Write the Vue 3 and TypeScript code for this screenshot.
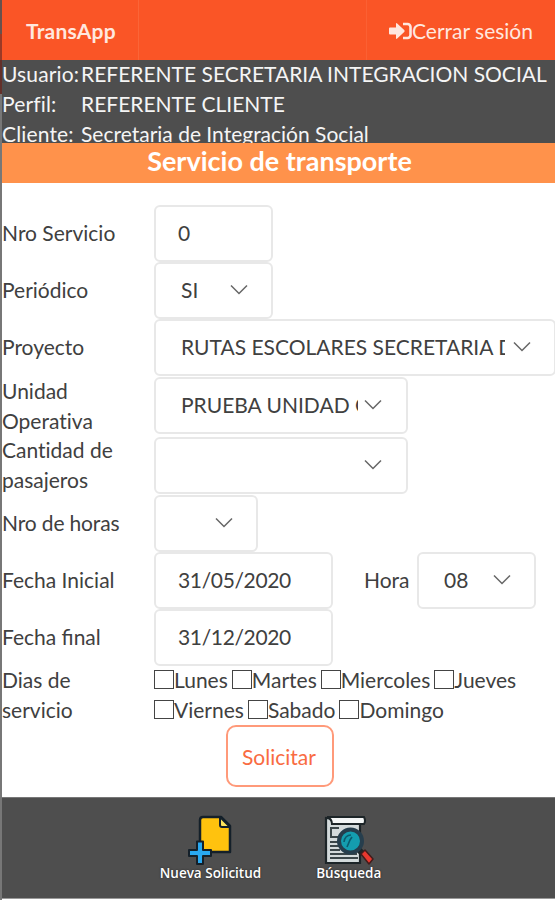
<script setup lang="ts">
interface Profile {
  label: string
  value: string
  kind: string
}

interface Field {
  label: string
  value: string
  select: boolean
  kind: string
  hour?: string
}

const profile: Profile[] = [
  { label: 'Usuario:', value: 'REFERENTE SECRETARIA INTEGRACION SOCIAL', kind: 'user' },
  { label: 'Perfil:', value: 'REFERENTE CLIENTE', kind: 'role' },
  { label: 'Cliente:', value: 'Secretaria de Integración Social', kind: 'client' },
]

const fields: Field[] = [
  { label: 'Nro Servicio', value: '0', select: false, kind: 'number' },
  { label: 'Periódico', value: 'SI', select: true, kind: 'periodic' },
  { label: 'Proyecto', value: 'RUTAS ESCOLARES SECRETARIA D', select: true, kind: 'project' },
  { label: 'Unidad Operativa', value: 'PRUEBA UNIDAD O', select: true, kind: 'unit' },
  { label: 'Cantidad de pasajeros', value: '', select: true, kind: 'passengers' },
  { label: 'Nro de horas', value: '', select: true, kind: 'hours' },
  { label: 'Fecha Inicial', value: '31/05/2020', select: false, kind: 'start', hour: '08' },
  { label: 'Fecha final', value: '31/12/2020', select: false, kind: 'end' },
]

const dayRows: string[][] = [
  ['Lunes', 'Martes', 'Miercoles', 'Jueves'],
  ['Viernes', 'Sabado', 'Domingo'],
]
</script>

<template>
  <div class="screen">
    <div class="edge"></div>
    <div class="page">
      <nav class="topbar">
        <div class="brand">TransApp</div>
        <div class="spacer"></div>
        <a class="logout">
          <svg class="logout-icon" viewBox="0 0 23 18">
            <path d="M1 5.500h6V2q0-1.500 1.200-.5l7 6.500q1 1 0 2l-7 6.500q-1.200 1-1.200-.5v-3.500H1q-1 0-1-1v-5q0-1 1-1z" fill="currentColor" />
            <path d="M14 2h4.500a3 3 0 0 1 3 3v8a3 3 0 0 1-3 3H14" fill="none" stroke="currentColor" stroke-width="2.600" />
          </svg>
          <span>Cerrar sesión</span>
        </a>
      </nav>

      <section class="profile">
        <div v-for="item in profile" :key="item.label" class="profile-row">
          <span class="profile-label">{{ item.label }}</span>
          <span :class="item.kind">{{ item.value }}</span>
        </div>
      </section>

      <h1 class="title"><span>Servicio de transporte</span></h1>

      <main class="form">
        <div v-for="field in fields" :key="field.kind" class="row" :class="'row-' + field.kind">
          <label class="label">{{ field.label }}</label>
          <div class="control" :class="[field.kind, { select: field.select }]">
            <span class="value">{{ field.value }}</span>
            <svg v-if="field.select" class="chevron" viewBox="0 0 18 11">
              <path d="M1 1.500l8 8 8-8" />
            </svg>
          </div>
          <template v-if="field.hour">
            <label class="hour-label">Hora</label>
            <div class="control select hour">
              <span class="value">{{ field.hour }}</span>
              <svg class="chevron" viewBox="0 0 18 11">
                <path d="M1 1.500l8 8 8-8" />
              </svg>
            </div>
          </template>
        </div>

        <div class="row row-days">
          <label class="label days-label">Dias de servicio</label>
          <div class="days">
            <div v-for="(days, index) in dayRows" :key="index" class="day-row">
              <label v-for="day in days" :key="day" class="day"><i class="box"></i>{{ day }}</label>
            </div>
          </div>
        </div>

        <button class="submit" type="button">Solicitar</button>
      </main>

      <footer class="footer">
        <a class="action create">
          <svg class="action-icon" viewBox="0 0 44 50">
            <path d="M15 2h18l9 9v26H12V5q0-3 3-3z" fill="#ffc20e" stroke="#14202a" stroke-width="2.500" stroke-linejoin="round" />
            <path d="M32 2v8q0 2 2 2h8z" fill="#ffe45c" stroke="#14202a" stroke-width="2" stroke-linejoin="round" />
            <path d="M9 26.500h6v8.500h8v6h-8v8H9v-8H1v-6h8z" fill="#29a9f2" stroke="#14202a" stroke-width="2" stroke-linejoin="round" />
          </svg>
          <span>Nueva Solicitud</span>
        </a>
        <a class="action search">
          <svg class="action-icon" viewBox="0 0 50 50">
            <path d="M2 3v45h34V8z" fill="#d3dadb" stroke="#1d2528" stroke-width="2.200" />
            <path d="M3 2h37q2 4 0 7H8Q8 4 3 2z" fill="#f4f6f6" stroke="#1d2528" stroke-width="2" />
            <path d="M15 13H7v9h9M6 27h9M6 31h9M6 35h10M6 39h27M6 43h28" fill="none" stroke="#3b4649" stroke-width="2" />
            <path d="M34 34l5 5" stroke="#1d2528" stroke-width="6" />
            <path d="M37 39l4-4 8 9-4 5z" fill="#e8382f" stroke="#431c1b" stroke-width="1.500" stroke-linejoin="round" />
            <circle cx="26.500" cy="26" r="11.500" fill="#149daf" stroke="#263e4d" stroke-width="4" />
            <path d="M20 27q1-7 7-7M23 32l3-7 2-3" fill="none" stroke="#0a5c6e" stroke-width="1.600" />
          </svg>
          <span>Búsqueda</span>
        </a>
      </footer>
    </div>
  </div>
</template>

<style>
body {
  margin: 0;
  overflow: hidden;
  background: #fff;
}
</style>

<style scoped>
.screen {
  display: flex;
  width: 555px;
  height: 900px;
  overflow: hidden;
  font-family: Lato, "Liberation Sans", sans-serif;
  font-size: 21px;
  line-height: 30px;
  color: #404040;
}

.edge {
  flex: none;
  width: 2px;
  background: linear-gradient(#66514d 0 34px, #9b3a26 34px 60px, #63302a 60px 94px, #777 94px);
}

.page {
  flex: none;
  width: 553px;
  height: 900px;
  box-sizing: border-box;
  display: flex;
  flex-direction: column;
  background: #fff;
}

.topbar {
  display: flex;
  flex: none;
  height: 60px;
  background: #fa5526;
  color: #ffe7df;
}

.brand,
.logout {
  display: flex;
  align-items: center;
  box-sizing: border-box;
  padding-top: 1px;
}

.brand {
  width: 137px;
  padding-left: 24px;
  border-right: 1px solid #fb6538;
  font-weight: 700;
  letter-spacing: 0.2px;
}

.spacer {
  flex: 1;
}

.logout {
  width: 189px;
  padding-left: 22px;
  border-left: 1px solid #fb6033;
  white-space: nowrap;
}

.logout-icon {
  flex: none;
  width: 23px;
  height: 18px;
}

.profile {
  flex: none;
  height: 83px;
  background: #4e4e4e;
  color: #f5f5f5;
  white-space: nowrap;
}

.profile-row {
  display: flex;
  height: 30px;
  line-height: 27px;
}

.profile-label {
  flex: none;
  width: 79px;
  letter-spacing: 0.15px;
}

.title {
  flex: none;
  margin: 0;
  height: 40px;
  box-sizing: border-box;
  padding-left: 2px;
  background: #ff924b;
  color: #fff;
  font-size: 27px;
  font-weight: 700;
  line-height: 36px;
  text-align: center;
}

.form {
  flex: none;
  display: flex;
  flex-direction: column;
  height: 614px;
  box-sizing: border-box;
  padding-top: 22px;
}

.row {
  display: flex;
  flex: none;
  align-items: center;
  height: 57px;
}

.row-unit {
  height: 59px;
}

.row-passengers {
  height: 60px;
}

.row-unit .label,
.row-passengers .label {
  font-variant-ligatures: none;
  padding-bottom: 0;
}

.row-hours .label {
  letter-spacing: -0.15px;
}

.row-days {
  height: 59px;
}

.label {
  flex: none;
  width: 152px;
  box-sizing: border-box;
  padding: 0 30px 1px 0;
}

.control {
  display: flex;
  flex: none;
  align-items: center;
  box-sizing: border-box;
  height: 57px;
  border: 2px solid #e8e8e8;
  border-radius: 6px;
  padding-left: 22px;
  background: #fff;
}

.control.select {
  padding-left: 25px;
}

.value {
  flex: 1;
  min-width: 0;
  overflow: hidden;
  padding-bottom: 1px;
  white-space: nowrap;
}

.chevron {
  flex: none;
  width: 18px;
  height: 11px;
  margin: 0 23px 2px 8px;
  fill: none;
  stroke: #666;
  stroke-width: 1.500;
}

.number,
.periodic,
.hour {
  width: 119px;
}

.project {
  width: 402px;
}

.project .chevron {
  margin-right: 23px;
  margin-left: 8px;
}

.unit,
.passengers {
  width: 254px;
}

.unit .chevron,
.passengers .chevron {
  margin-right: 24px;
  margin-left: 6px;
}

.hours {
  width: 104px;
}

.start,
.end {
  width: 179px;
}

.start .value,
.end .value {
  letter-spacing: -0.35px;
}

.hour-label {
  flex: none;
  width: 53px;
  margin-left: 31px;
  padding-bottom: 1px;
}

.days-label {
  padding-right: 60px;
}

.days {
  padding-bottom: 2px;
}

.day-row {
  display: flex;
  height: 30px;
  gap: 4px;
  line-height: 29px;
}

.day {
  display: flex;
  white-space: nowrap;
}

.box {
  flex: none;
  box-sizing: border-box;
  width: 20px;
  height: 19px;
  margin-top: 5px;
  border: 1px solid #444;
}

.submit {
  flex: none;
  width: 108px;
  height: 62px;
  margin: 0 0 0 224px;
  padding: 1px 2px 0 0;
  border: 2px solid #ff9a7a;
  border-radius: 10px;
  background: #fff;
  color: #f96b42;
  font: inherit;
}

.footer {
  display: flex;
  flex: none;
  justify-content: center;
  gap: 55px;
  height: 102px;
  box-sizing: border-box;
  padding: 17px 16px 0 0;
  border-top: 1px solid #777;
  border-bottom: 1px solid #999;
  background: #4e4e4e;
  color: #fff;
  font-family: "Open Sans", sans-serif;
  font-size: 13.500px;
  font-weight: 600;
  line-height: 17px;
  text-shadow: 0 0 2px #222;
}

.action {
  display: flex;
  flex-direction: column;
  align-items: center;
  white-space: nowrap;
}

.create .action-icon {
  width: 44px;
  height: 50px;
}

.search .action-icon {
  width: 50px;
  height: 50px;
}
</style>
